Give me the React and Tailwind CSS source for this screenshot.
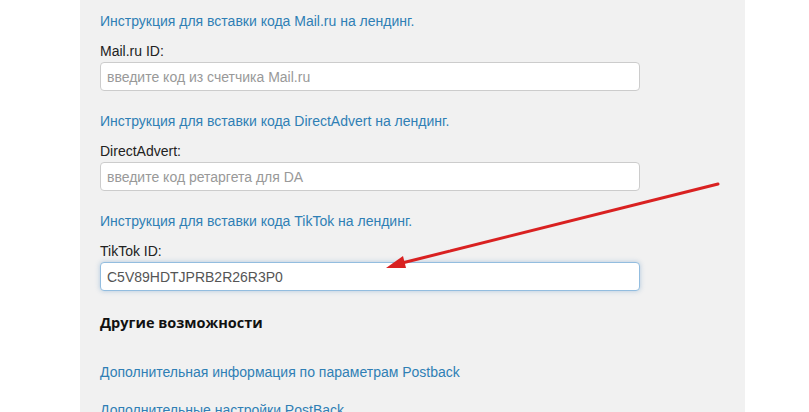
const Field = ({ link, label, placeholder, value, focused }) => (
  <div className="mb-5">
    <a href="#" className="block text-[14px] leading-5 text-[#2f7fb5]">{link}</a>
    <div className="mt-[10px] text-[14px] leading-5 text-[#222]">{label}</div>
    <input
      readOnly
      defaultValue={value}
      placeholder={placeholder}
      className={
        'mt-[1px] block h-[29px] w-[540px] rounded-[4px] border bg-white px-[6px] text-[14px] text-[#555] placeholder:text-[#999] outline-none ' +
        (focused
          ? 'border-[#93bddf] shadow-[0_0_5px_rgba(102,150,200,0.45)]'
          : 'border-[#cccccc]')
      }
    />
  </div>
);

export default function App() {
  return (
    <div
      className="relative h-[412px] w-[809px] overflow-hidden bg-white"
      style={{ fontFamily: '"Liberation Sans", Arial, sans-serif' }}
    >
      <div className="ml-[80px] h-full w-[665px] bg-[#f1f1f1] px-5 pt-[11px]">
        <Field
          link="Инструкция для вставки кода Mail.ru на лендинг."
          label="Mail.ru ID:"
          placeholder="введите код из счетчика Mail.ru"
        />
        <Field
          link="Инструкция для вставки кода DirectAdvert на лендинг."
          label="DirectAdvert:"
          placeholder="введите код ретаргета для DA"
        />
        <Field
          link="Инструкция для вставки кода TikTok на лендинг."
          label="TikTok ID:"
          value="C5V89HDTJPRB2R26R3P0"
          focused
        />
        <h3 className="mt-[22px] text-[14.5px] font-bold leading-5 text-[#111]" style={{ fontFamily: '"Open Sans", sans-serif' }}>
          Другие возможности
        </h3>
        <a href="#" className="mt-[29px] block text-[14px] leading-5 text-[#2f7fb5]">
          Дополнительная информация по параметрам Postback
        </a>
        <a href="#" className="mt-[18px] block text-[14px] leading-5 text-[#2f7fb5]">
          Дополнительные настройки PostBack
        </a>
      </div>
      <svg className="pointer-events-none absolute left-0 top-0" width="809" height="412">
        <line x1="718" y1="184" x2="398" y2="264" stroke="#d92121" strokeWidth="3" strokeLinecap="round" />
        <polygon points="386,268 403,256 406,268" fill="#d92121" />
      </svg>
    </div>
  );
}
